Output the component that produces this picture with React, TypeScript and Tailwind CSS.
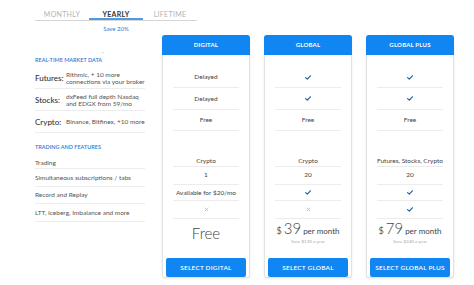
import React from 'react';

const FONT = { fontFamily: 'Lato, "Open Sans", sans-serif' };

type Cell = string | 'check' | 'cross';

interface Plan {
  name: string;
  market: Cell[];
  features: Cell[];
  price: string | null;
  save?: string;
  button: string;
}

const plans: Plan[] = [
  {
    name: 'DIGITAL',
    market: ['Delayed', 'Delayed', 'Free'],
    features: ['Crypto', '1', 'Available for $20/mo', 'cross'],
    price: null,
    button: 'SELECT DIGITAL',
  },
  {
    name: 'GLOBAL',
    market: ['check', 'check', 'Free'],
    features: ['Crypto', '20', 'check', 'cross'],
    price: '39',
    save: 'Save $120 a year',
    button: 'SELECT GLOBAL',
  },
  {
    name: 'GLOBAL PLUS',
    market: ['check', 'check', 'Free'],
    features: ['Futures, Stocks, Crypto', '20', 'check', 'check'],
    price: '79',
    save: 'Save $240 a year',
    button: 'SELECT GLOBAL PLUS',
  },
];

const marketRows = ['h-[21px]', 'h-[22px]', 'h-[22px]'];
const featureRows = ['h-[12px]', 'h-[18px]', 'h-[17px]', 'h-[18px]'];

function Check() {
  return (
    <svg width="6" height="5" viewBox="0 0 6 5" fill="none">
      <path d="M0.6 2.6 L2.3 4.1 L5.4 0.8" stroke="#1f5fa6" strokeWidth="1.2" strokeLinecap="round" strokeLinejoin="round" />
    </svg>
  );
}

function Cross() {
  return (
    <svg width="5" height="5" viewBox="0 0 5 5" fill="none">
      <path d="M1 1 L4 4 M4 1 L1 4" stroke="#b8b8b8" strokeWidth="0.8" strokeLinecap="round" />
    </svg>
  );
}

function CellContent({ value }: { value: Cell }) {
  if (value === 'check') return <Check />;
  if (value === 'cross') return <Cross />;
  return <span className="text-[6.5px] text-[#444] whitespace-nowrap">{value}</span>;
}

function PlanCard({ plan }: { plan: Plan }) {
  return (
    <div className="w-[88px] h-[243px] flex flex-col border-x border-b border-[#e2e2e2] rounded-[3px] shadow-[0_1px_3px_rgba(0,0,0,0.08)] bg-white">
      <div className="h-[20px] bg-[#0f86f2] rounded-t-[3px] -mx-px flex items-center justify-center text-white text-[6px] font-bold tracking-[0.2px]">
        {plan.name}
      </div>
      <div className="h-[13px]" />
      {plan.market.map((c, i) => (
        <div key={i} className={`${marketRows[i]} mx-[10px] border-b border-[#ececec] flex items-center justify-center`}>
          <CellContent value={c} />
        </div>
      ))}
      <div className="h-[24px]" />
      {plan.features.map((c, i) => (
        <div key={i} className={`${featureRows[i]} mx-[10px] border-b border-[#ececec] flex items-center justify-center`}>
          <CellContent value={c} />
        </div>
      ))}
      <div className="h-[28px] flex flex-col items-center justify-center text-[#444]">
        {plan.price === null ? (
          <span className="text-[15px] font-light leading-[16px]">Free</span>
        ) : (
          <>
            <div className="flex items-baseline leading-[15px] whitespace-nowrap">
              <span className="text-[9px] text-[#555] mr-[2px]">$</span>
              <span className="text-[15px] font-light">{plan.price}</span>
              <span className="text-[8px] ml-[2px]">per month</span>
            </div>
            <span className="text-[4.5px] text-[#aaa] leading-[5px]">{plan.save}</span>
          </>
        )}
      </div>
      <div className="px-[3px] pt-[5px]">
        <button className="w-full h-[19px] bg-[#0f86f2] rounded-[2px] text-white text-[6.5px] font-semibold tracking-[0.2px] whitespace-nowrap">
          {plan.button}
        </button>
      </div>
    </div>
  );
}

function LeftColumn() {
  return (
    <div className="w-[110px] flex flex-col">
      <div className="h-[20px]" />
      <div className="h-[13px] flex items-start pt-[1px] text-[5.5px] text-[#2a7dd2] font-semibold">
        REAL-TIME MARKET DATA<sup className="text-[4px]">*</sup>
      </div>
      <div className={`${marketRows[0]} border-b border-[#ececec] flex items-center`}>
        <span className="w-[31px] text-[8px] text-[#333] font-medium">Futures:</span>
        <span className="text-[6.5px] leading-[7px] text-[#555]">
          Rithmic, + 10 more
          <br />
          connections via your broker
        </span>
      </div>
      <div className={`${marketRows[1]} border-b border-[#ececec] flex items-center`}>
        <span className="w-[31px] text-[8px] text-[#333] font-medium">Stocks:</span>
        <span className="text-[6.5px] leading-[7px] text-[#555]">
          dxFeed full depth Nasdaq
          <br />
          and EDGX from 59/mo
        </span>
      </div>
      <div className={`${marketRows[2]} border-b border-[#ececec] flex items-center`}>
        <span className="w-[31px] text-[8px] text-[#333] font-medium">Crypto:</span>
        <span className="text-[6.5px] text-[#555]">Binance, Bitfinex, +10 more</span>
      </div>
      <div className="h-[24px] flex items-center pt-[4px] text-[5.5px] text-[#2a7dd2] font-semibold">
        TRADING AND FEATURES
      </div>
      {['Trading', 'Simultaneous subscriptions / tabs', 'Record and Replay', 'LTT, Iceberg, Imbalance and more'].map((t, i) => (
        <div key={t} className={`${featureRows[i]} border-b border-[#ececec] flex items-center text-[6.5px] text-[#555]`}>
          {t}
        </div>
      ))}
    </div>
  );
}

export default function App() {
  return (
    <div className="w-[474px] h-[285px] bg-white overflow-hidden pl-[35px]" style={FONT}>
      <div className="h-[35px] w-[162px] flex flex-col">
        <div className="flex pt-[9px] border-b border-[#d6d6d6]">
          <div className="w-[54px] h-[11px] text-center text-[7px] text-[#b3b3b3] tracking-[0.3px]">MONTHLY</div>
          <div className="w-[54px] h-[11px] text-center text-[7px] text-[#333] font-bold tracking-[0.3px] border-b-2 border-[#4d9be0] -mb-px">
            YEARLY
          </div>
          <div className="w-[54px] h-[11px] text-center text-[7px] text-[#b3b3b3] tracking-[0.3px]">LIFETIME</div>
        </div>
        <div className="w-[54px] ml-[54px] text-center text-[6px] text-[#2a7dd2] mt-[3px]">Save 20%</div>
      </div>
      <div className="flex">
        <LeftColumn />
        <div className="flex gap-[14px] ml-[17px]">
          {plans.map(p => (
            <PlanCard key={p.name} plan={p} />
          ))}
        </div>
      </div>
    </div>
  );
}
